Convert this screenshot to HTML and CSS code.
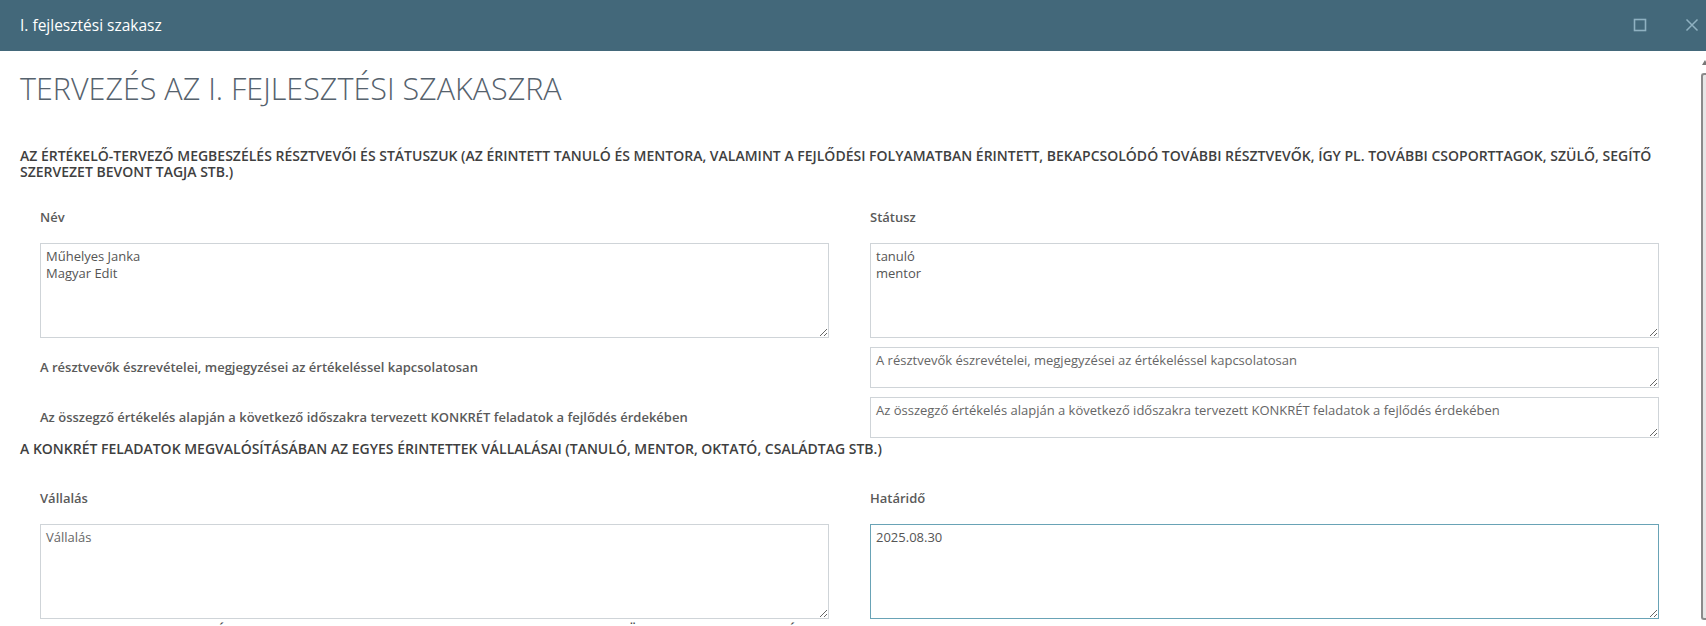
FILE: index.html
```html
<!DOCTYPE html>
<html lang="hu">
<head>
    <meta charset="UTF-8">
    <meta name="viewport" content="width=device-width, initial-scale=1.0">
    <title>I. fejlesztési szakasz</title>
<link rel="stylesheet" href="styles.css">
</head>
<body>
<div class="dialog">
    <div class="titlebar">
        <span class="title">I. fejlesztési szakasz</span>
        <div class="actions">
            <svg class="icon" width="14" height="14" viewBox="0 0 14 14"><rect x="1.5" y="1.5" width="11" height="11" fill="none" stroke="currentColor" stroke-width="1.6"/></svg>
            <svg class="icon" width="14" height="14" viewBox="0 0 14 14"><path d="M1.5 1.5 L12.5 12.5 M12.5 1.5 L1.5 12.5" fill="none" stroke="currentColor" stroke-width="1.5"/></svg>
        </div>
    </div>
    <div class="body">
        <div class="content">
            <h1 class="page-title">TERVEZÉS AZ I. FEJLESZTÉSI SZAKASZRA</h1>

            <h2 class="section-title first">Az értékelő-tervező megbeszélés résztvevői és státuszuk (az érintett tanuló és mentora, valamint a fejlődési folyamatban érintett, bekapcsolódó további résztvevők, így pl. további csoporttagok, szülő, segítő szervezet bevont tagja stb.)</h2>
            <div class="form-grid participants">
                <div class="field">
                    <label>Név</label>
                    <textarea class="tall">Műhelyes Janka
Magyar Edit</textarea>
                </div>
                <div class="field">
                    <label>Státusz</label>
                    <textarea class="tall">tanuló
mentor</textarea>
                </div>
                <div class="side-label">A résztvevők észrevételei, megjegyzései az értékeléssel kapcsolatosan</div>
                <textarea class="short" placeholder="A résztvevők észrevételei, megjegyzései az értékeléssel kapcsolatosan"></textarea>
                <div class="side-label">Az összegző értékelés alapján a következő időszakra tervezett KONKRÉT feladatok a fejlődés érdekében</div>
                <textarea class="short" placeholder="Az összegző értékelés alapján a következő időszakra tervezett KONKRÉT feladatok a fejlődés érdekében"></textarea>
            </div>

            <h2 class="section-title second">A konkrét feladatok megvalósításában az egyes érintettek vállalásai (tanuló, mentor, oktató, családtag stb.)</h2>
            <div class="form-grid tasks">
                <div class="field">
                    <label>Vállalás</label>
                    <textarea class="tall" placeholder="Vállalás"></textarea>
                </div>
                <div class="field">
                    <label>Határidő</label>
                    <textarea class="tall active">2025.08.30</textarea>
                </div>
            </div>

            <h2 class="section-title next">A kiterjesztett feladatok és a szakasz keretei, egyes folyamat elemei szerint az összes szempont további elemei</h2>
        </div>
        <div class="scrollbar">
            <div class="arrow"></div>
            <div class="thumb"></div>
        </div>
    </div>
</div>
</body>
</html>
```

FILE: styles.css
```css
    body {
        margin: 0;
        background: #fff;
        font-family: "Open Sans", "Liberation Sans", sans-serif;
        color: #555;
        overflow: hidden;
    }
    .dialog {
        width: 1706px;
        height: 626px;
        display: flex;
        flex-direction: column;
        overflow: hidden;
    }
    .titlebar {
        height: 51px;
        flex: none;
        background: #43687a;
        display: flex;
        align-items: center;
        justify-content: space-between;
        padding: 0 7px 0 20px;
    }
    .title {
        color: #fff;
        font-size: 15.5px;
        line-height: 51px;
    }
    .actions {
        display: flex;
        gap: 38px;
        color: #8fb1c1;
        padding-bottom: 1px;
    }
    .icon {
        display: block;
    }
    .body {
        flex: 1;
        display: flex;
        min-height: 0;
    }
    .content {
        flex: 1;
        overflow: hidden;
    }
    .page-title {
        margin: 19px 0 0 20px;
        font-size: 30.5px;
        line-height: 37px;
        font-weight: 300;
        color: #56626d;
    }
    .section-title {
        margin: 2px 46px 0 20px;
        font-size: 14px;
        line-height: 16px;
        font-weight: 600;
        text-transform: uppercase;
        color: #3f3f3f;
    }
    .section-title.first {
        margin-top: 41px;
    }
    .section-title.second {
        margin-top: 3px;
    }
    .section-title.next {
        margin-top: 4px;
    }
    .form-grid {
        display: grid;
        grid-template-columns: 1fr 1fr;
        column-gap: 41px;
        row-gap: 9px;
        padding: 0 41px 0 40px;
    }
    .participants {
        margin-top: 29px;
    }
    .tasks {
        margin-top: 33px;
    }
    .field label {
        display: block;
        font-size: 13px;
        line-height: 17px;
        font-weight: 600;
        color: #5a5a5a;
        margin-bottom: 17px;
    }
    .side-label {
        align-self: center;
        font-size: 13px;
        line-height: 17px;
        font-weight: 600;
        color: #5a5a5a;
    }
    textarea {
        display: block;
        width: 100%;
        box-sizing: border-box;
        margin: 0;
        padding: 4px 5px;
        border: 1px solid #cfd4d8;
        border-radius: 0;
        font-family: "Open Sans", "Liberation Sans", sans-serif;
        font-size: 13px;
        line-height: 17px;
        color: #555;
        background: #fff;
        outline: none;
    }
    textarea::placeholder {
        color: #666;
        opacity: 1;
    }
    textarea.tall {
        height: 95px;
    }
    textarea.short {
        height: 41px;
    }
    textarea.active {
        border-color: #69a3b6;
    }
    .scrollbar {
        width: 6px;
        flex: none;
        display: flex;
        flex-direction: column;
        padding-top: 9px;
    }
    .arrow {
        width: 0;
        height: 0;
        margin-left: 2px;
        border-left: 3px solid transparent;
        border-right: 3px solid transparent;
        border-bottom: 5px solid #777;
    }
    .thumb {
        flex: 1;
        margin: 8px 0 6px 1px;
        border-left: 2px solid #8a8a8a;
        border-top: 2px solid #8a8a8a;
        border-bottom: 2px solid #8a8a8a;
        border-radius: 3px 0 0 3px;
        background: #e6e6e6;
    }
```
